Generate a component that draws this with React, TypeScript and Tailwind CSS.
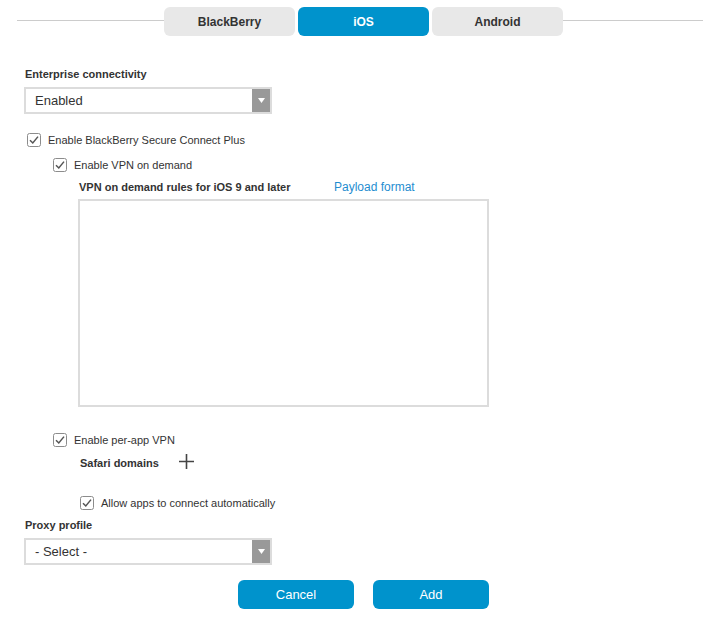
import { ReactNode } from "react";

const font = { fontFamily: '"Liberation Sans", Arial, sans-serif' };

const Check = ({ label, className = "" }: { label: string; className?: string }) => (
  <div className={"flex items-center h-[14px] " + className}>
    <svg width="14" height="14" viewBox="0 0 14 14" className="shrink-0">
      <rect x="0.5" y="0.5" width="13" height="13" rx="2" fill="#fff" stroke="#8c8c8c" />
      <path d="M3 7.2 L5.8 10 L11 3.6" fill="none" stroke="#555" strokeWidth="1.5" />
    </svg>
    <span className="ml-[7px] text-[11px] leading-[14px] text-[#333]">{label}</span>
  </div>
);

const Select = ({ value }: { value: string }) => (
  <div className="flex h-[27px] w-[248px] border-2 border-[#dcdcdc] bg-white">
    <div className="flex-1 pl-[9px] text-[13px] leading-[23px] text-[#333]">{value}</div>
    <div className="flex w-[18px] items-center justify-center bg-[#999]">
      <svg width="7" height="5" viewBox="0 0 7 5">
        <path d="M0 0 H7 L3.5 5 Z" fill="#fff" />
      </svg>
    </div>
  </div>
);

const Label = ({ children, className = "" }: { children: ReactNode; className?: string }) => (
  <div className={"text-[11px] font-bold leading-[14px] text-[#333] " + className}>{children}</div>
);

const Tab = ({ name, active }: { name: string; active?: boolean }) => (
  <div
    className={
      "flex h-[29px] w-[131px] items-center justify-center rounded-[6px] text-[12px] font-bold " +
      (active ? "bg-[#0093cc] text-white" : "bg-[#e8e8e8] text-[#333]")
    }
  >
    {name}
  </div>
);

export default function App() {
  return (
    <div className="h-[624px] w-[711px] bg-white" style={font}>
      <div className="flex items-start pl-[17px] pr-[8px] pt-[7px]">
        <div className="mt-[13px] h-px w-[147px] bg-[#cccccc]" />
        <div className="flex gap-[3px]">
          <Tab name="BlackBerry" />
          <Tab name="iOS" active />
          <Tab name="Android" />
        </div>
        <div className="mt-[13px] h-px flex-1 bg-[#cccccc]" />
      </div>

      <div className="pl-[24px]">
        <Label className="mt-[31px] pl-px">Enterprise connectivity</Label>
        <div className="mt-[6px]">
          <Select value="Enabled" />
        </div>

        <Check label="Enable BlackBerry Secure Connect Plus" className="mt-[19px] pl-[3px]" />
        <Check label="Enable VPN on demand" className="mt-[11px] pl-[29px]" />

        <div className="mt-[8px] flex pl-[55px]">
          <Label className="w-[255px]">VPN on demand rules for iOS 9 and later</Label>
          <span className="text-[12px] leading-[14px] text-[#1f8dd0]">Payload format</span>
        </div>
        <div className="ml-[54px] mt-[5px] h-[208px] w-[411px] border-2 border-[#dcdcdc] bg-white" />

        <Check label="Enable per-app VPN" className="mt-[26px] pl-[29px]" />
        <div className="mt-[9px] flex items-center pl-[56px]">
          <Label>Safari domains</Label>
          <svg width="15" height="15" viewBox="0 0 15 15" className="ml-[20px] -mt-[3px]">
            <path d="M7.5 0 V15 M0 7.5 H15" stroke="#444" strokeWidth="1.6" />
          </svg>
        </div>

        <Check label="Allow apps to connect automatically" className="mt-[26px] pl-[56px]" />

        <Label className="mt-[8px] pl-px">Proxy profile</Label>
        <div className="mt-[6px]">
          <Select value="- Select -" />
        </div>
      </div>

      <div className="mt-[15px] flex gap-[19px] pl-[238px]">
        <button className="h-[29px] w-[116px] rounded-[6px] bg-[#0093cc] text-[13px] text-white">Cancel</button>
        <button className="h-[29px] w-[116px] rounded-[6px] bg-[#0093cc] text-[13px] text-white">Add</button>
      </div>
    </div>
  );
}
